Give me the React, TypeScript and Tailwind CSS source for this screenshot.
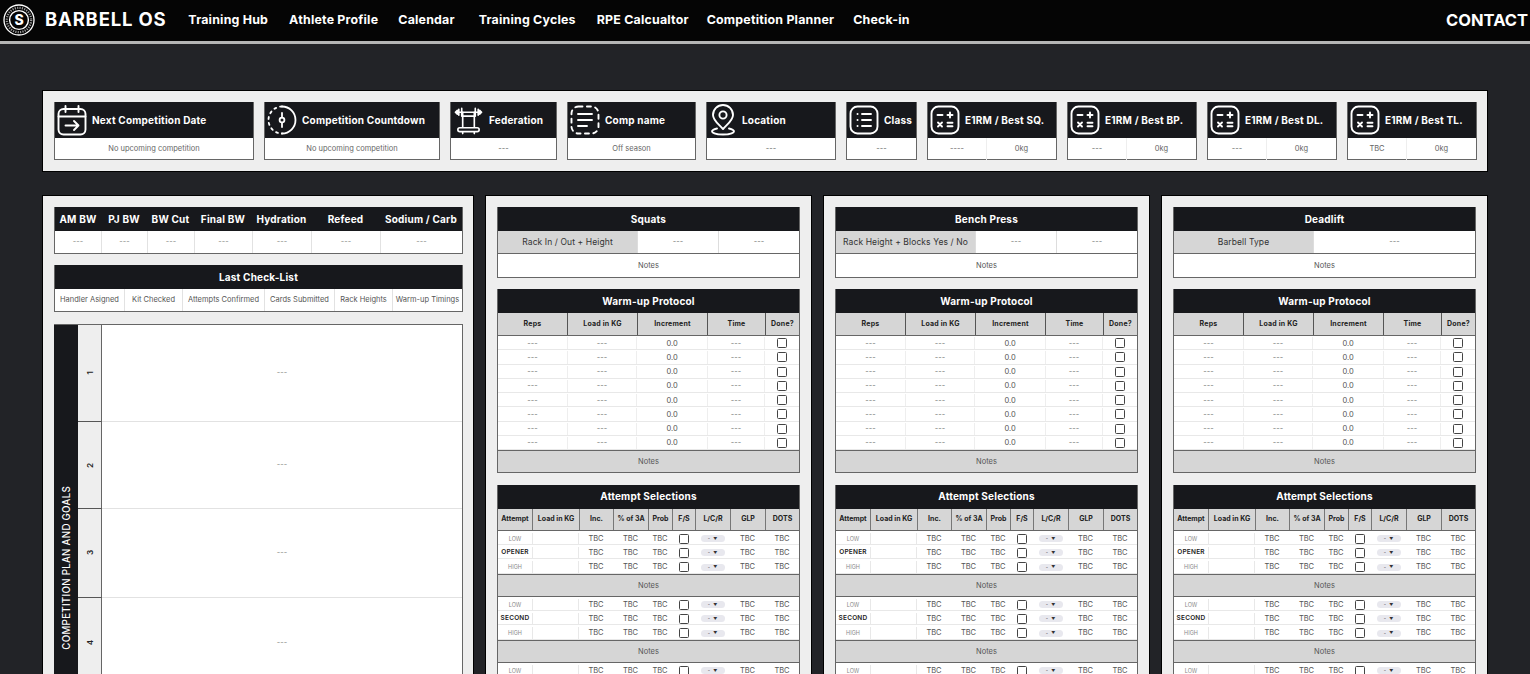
import type { ReactNode } from "react";

const navLinks = [
  { label: "Training Hub", cls: "ml-[22px]" },
  { label: "Athlete Profile", cls: "ml-[21px]" },
  { label: "Calendar", cls: "ml-[20px]" },
  { label: "Training Cycles", cls: "ml-[24px]" },
  { label: "RPE Calcualtor", cls: "ml-[21px]" },
  { label: "Competition Planner", cls: "ml-[18px]" },
  { label: "Check-in", cls: "ml-[19px]" },
];

function Logo() {
  return (
    <svg width="32" height="32" viewBox="0 0 32 32" fill="none" stroke="#fff" className="shrink-0">
      <circle cx="16" cy="16" r="15" strokeWidth="1.3" />
      <circle cx="16" cy="16" r="12.2" strokeWidth="2.2" strokeDasharray="1.2 1.2" opacity="0.6" />
      <circle cx="16" cy="16" r="9.4" strokeWidth="1.4" />
      <text x="16" y="21" textAnchor="middle" fontSize="14" fontWeight="800" fill="#fff" stroke="none" fontFamily="Inter, sans-serif">S</text>
    </svg>
  );
}

function CalendarIcon() {
  return (
    <svg width="30" height="32" viewBox="0 0 30 32" fill="none" stroke="#fff" strokeWidth="1.9" strokeLinecap="round" strokeLinejoin="round">
      <rect x="1.5" y="5" width="27" height="25.5" rx="5" />
      <path d="M1.5 12.5h27M8.5 2v6M21.5 2v6M8.5 21.5h13M17 17l4.5 4.5-4.5 4.5" />
    </svg>
  );
}

function TimerIcon() {
  return (
    <svg width="30" height="32" viewBox="0 0 30 32" fill="none" stroke="#fff" strokeWidth="1.8" strokeLinecap="round">
      <path d="M15 2.5a13.5 13.5 0 0 1 0 27" />
      <path d="M15 2.5a13.5 13.5 0 0 0 0 27" strokeDasharray="2 4" />
      <path d="M15 9v14" />
      <circle cx="15" cy="16" r="2.4" fill="#17181c" />
    </svg>
  );
}

function RackIcon() {
  return (
    <svg width="31" height="32" viewBox="0 0 32 32" fill="none" stroke="#fff" strokeWidth="1.7" strokeLinecap="round" strokeLinejoin="round">
      <path d="M6 8h20M6 5v6M9 4v8M23 4v8M26 5v6" />
      <path d="M2.5 8l2-2v4zM29.5 8l-2-2v4z" fill="#fff" />
      <path d="M10 8v16M22 8v16M10 12h12M7 24h18a2 2 0 0 1 0 4H7a2 2 0 0 1 0-4zM10 28v2M22 28v2" />
    </svg>
  );
}

function NotesIcon() {
  return (
    <svg width="30" height="32" viewBox="0 0 30 32" fill="none" stroke="#fff" strokeWidth="1.9" strokeLinecap="round">
      <rect x="1.5" y="2.5" width="27" height="27" rx="7" strokeDasharray="4 4.4" />
      <path d="M8 10h14M8 16h14M8 22h9" />
    </svg>
  );
}

function PinIcon() {
  return (
    <svg width="28" height="32" viewBox="0 0 28 32" fill="none" stroke="#fff" strokeWidth="1.9" strokeLinecap="round" strokeLinejoin="round">
      <path d="M14 25c-4-4.5-10-8.5-10-14a10 10 0 0 1 20 0c0 5.5-6 9.5-10 14z" />
      <circle cx="14" cy="11" r="3.6" />
      <path d="M8 24.5c-3 .8-5 1.6-5 2.8 0 1.8 5 3.2 11 3.2s11-1.400 11-3.200c0-1.200-2-2-5-2.800" />
    </svg>
  );
}

function ListIcon() {
  return (
    <svg width="30" height="32" viewBox="0 0 30 32" fill="none" stroke="#fff" strokeWidth="1.9" strokeLinecap="round">
      <rect x="1.5" y="2.5" width="27" height="27" rx="7" />
      <path d="M8.5 10h.1M8.5 16h.1M8.5 22h.1M13 10h9M13 16h9M13 22h9" />
    </svg>
  );
}

function CalcIcon() {
  return (
    <svg width="30" height="32" viewBox="0 0 30 32" fill="none" stroke="#fff" strokeWidth="1.9" strokeLinecap="round">
      <rect x="1.5" y="2.5" width="27" height="27" rx="7" />
      <path d="M7.5 11h5M17.5 11h5M20 8.5v5M8 18.5l4 4M12 18.5l-4 4M17.5 18.8h5M17.5 22.2h5" />
    </svg>
  );
}

function StatCard({ icon, title, width, value, second }: { icon: ReactNode; title: string; width: string; value: string; second?: string }) {
  return (
    <div className={`${width} shrink-0 border border-[#666] border-t-0 bg-white`}>
      <div className="flex h-[36px] items-center gap-[5px] overflow-hidden whitespace-nowrap bg-[#17181c] pl-[2px] text-[10px] font-bold tracking-[0.2px] text-white">
        {icon}
        {title}
      </div>
      <div className="flex h-[22px] items-center text-[7.5px] text-[#666]">
        <span className="flex-1 text-center">{value}</span>
        {second && <span className="flex h-full w-[70px] items-center justify-center border-l border-[#eee]">{second}</span>}
      </div>
    </div>
  );
}

function DarkHeader({ title }: { title: string }) {
  return <div className="flex h-[24px] items-center justify-center bg-[#17181c] text-[10px] font-bold tracking-[0.2px] text-white">{title}</div>;
}

function Checkbox() {
  return <span className="block h-[10px] w-[10px] rounded-[1.5px] border-[1.5px] border-[#444] bg-white" />;
}

function Stage({ name }: { name: string }) {
  const rows = ["LOW", name, "HIGH"];
  return (
    <>
      {rows.map((row, i) => (
        <div key={row} className="grid h-[14.2px] grid-cols-[34px_47px_34px_35px_24px_23px_35px_35px_1fr] items-center border-b border-[#e8e8e8] pt-[2px] text-center text-[7.5px] text-[#555] last:border-b-0">
          <span className={i === 1 ? "text-[6.5px] font-semibold tracking-[0.2px] text-[#222]" : "text-[5.5px] text-[#888]"}>{row}</span>
          <span className="h-full border-x border-[#e8e8e8]" />
          <span>TBC</span>
          <span>TBC</span>
          <span>TBC</span>
          <span className="flex justify-center"><Checkbox /></span>
          <span className="flex justify-center">
            <span className="flex h-[7px] w-[24px] items-center justify-center gap-[3px] rounded-full bg-[#e8e8ee] text-[5px] leading-none text-[#333]">- <span className="text-[4px]">▼</span></span>
          </span>
          <span>TBC</span>
          <span>TBC</span>
        </div>
      ))}
    </>
  );
}

function NotesBar() {
  return <div className="flex h-[23.5px] items-center justify-center border-y border-[#666] bg-[#d6d6d6] text-[7.5px] text-[#555]">Notes</div>;
}

function LiftPanel({ title, label, values }: { title: string; label: string; values: string[] }) {
  const warmCols = ["Reps", "Load in KG", "Increment", "Time", "Done?"];
  const attemptCols = ["Attempt", "Load in KG", "Inc.", "% of 3A", "Prob", "F/S", "L/C/R", "GLP", "DOTS"];
  return (
    <div className="flex flex-col gap-[11.5px] border border-black bg-[#eee] px-[11px] pb-[11px] pt-[11px]">
      <div className="border border-[#666] border-t-0 bg-white">
        <DarkHeader title={title} />
        <div className="flex h-[23px] border-b border-[#666]">
          <div className="flex w-[139px] items-center justify-center whitespace-nowrap bg-[#d6d6d6] text-[8.5px] tracking-[0.1px] text-[#333]">{label}</div>
          {values.map((v, i) => (
            <div key={i} className="flex flex-1 items-center justify-center border-l border-[#ddd] text-[7.5px] text-[#777]">{v}</div>
          ))}
        </div>
        <div className="flex h-[22.5px] items-center justify-center pt-[1px] text-[7.5px] text-[#555]">Notes</div>
      </div>

      <div className="border border-[#666] border-t-0 bg-white">
        <DarkHeader title="Warm-up Protocol" />
        <div className="grid h-[23px] grid-cols-[69px_70px_70px_58px_1fr] border-b border-[#666] bg-[#d6d6d6] text-[7px] font-bold tracking-[0.2px] text-[#222]">
          {warmCols.map((c) => (
            <div key={c} className="flex items-center justify-center border-l border-[#555] first:border-l-0">{c}</div>
          ))}
        </div>
        {[0, 1, 2, 3, 4, 5, 6, 7].map((n) => (
          <div key={n} className="grid h-[14.25px] grid-cols-[69px_70px_70px_58px_1fr] items-center border-b border-[#e8e8e8] pt-[1px] text-center text-[7.5px] text-[#777] last:border-b-0">
            <span>---</span>
            <span className="flex h-full items-center justify-center border-x border-[#eee]">---</span>
            <span className="text-[#555]">0.0</span>
            <span className="flex h-full items-center justify-center border-x border-[#eee]">---</span>
            <span className="flex justify-center"><Checkbox /></span>
          </div>
        ))}
        <div className="flex h-[22px] items-center justify-center border-t border-[#666] bg-[#d6d6d6] text-[7.5px] text-[#555]">Notes</div>
      </div>

      <div className="border border-[#666] border-t-0 bg-white">
        <DarkHeader title="Attempt Selections" />
        <div className="grid h-[22.5px] grid-cols-[34px_47px_34px_35px_24px_23px_35px_35px_1fr] border-b border-[#666] bg-[#d6d6d6] text-[7px] font-bold text-[#222]">
          {attemptCols.map((c) => (
            <div key={c} className="flex items-center justify-center whitespace-nowrap border-l border-[#777] first:border-l-0">{c}</div>
          ))}
        </div>
        <Stage name="OPENER" />
        <NotesBar />
        <Stage name="SECOND" />
        <NotesBar />
        <Stage name="THIRD" />
      </div>
    </div>
  );
}

function LeftPanel() {
  const cols = ["AM BW", "PJ BW", "BW Cut", "Final BW", "Hydration", "Refeed", "Sodium / Carb"];
  const checks = ["Handler Asigned", "Kit Checked", "Attempts Confirmed", "Cards Submitted", "Rack Heights", "Warm-up Timings"];
  const plans = [
    { n: "1", h: "h-[97px]" },
    { n: "2", h: "h-[87px]" },
    { n: "3", h: "h-[89px]" },
    { n: "4", h: "h-[90px]" },
    { n: "5", h: "h-[125px]" },
  ];
  return (
    <div className="flex flex-col border border-black bg-[#eee] pl-[11px] pr-[10px] pt-[11px]">
      <div className="border border-[#666] border-t-0 bg-white">
        <div className="grid h-[24px] grid-cols-[46px_46px_47px_58px_59px_69px_1fr] items-center bg-[#17181c] text-center text-[10px] font-bold tracking-[0.2px] text-white">
          {cols.map((c) => (
            <span key={c} className="whitespace-nowrap">{c}</span>
          ))}
        </div>
        <div className="grid h-[22px] grid-cols-[46px_46px_47px_58px_59px_69px_1fr] text-[7.5px] text-[#888]">
          {cols.map((c) => (
            <div key={c} className="flex items-center justify-center border-l border-[#e2e2e2] first:border-l-0">---</div>
          ))}
        </div>
      </div>

      <div className="mt-[11px] border border-[#666] border-t-0 bg-white">
        <DarkHeader title="Last Check-List" />
        <div className="grid h-[22px] grid-cols-[69px_58px_82px_70px_58px_1fr] text-[7.5px] text-[#555]">
          {checks.map((c) => (
            <div key={c} className="flex items-center justify-center whitespace-nowrap border-l border-[#e2e2e2] first:border-l-0">{c}</div>
          ))}
        </div>
      </div>

      <div className="mt-[12px] flex h-[488px] border border-[#666] border-l-0 bg-white">
        <div className="flex w-[24px] shrink-0 items-center justify-center bg-[#17181c] pl-[3px]">
          <span className="rotate-180 whitespace-nowrap text-[9.7px] font-medium tracking-[0.3px] text-white [writing-mode:vertical-rl]">COMPETITION PLAN AND GOALS</span>
        </div>
        <div className="flex flex-1 flex-col">
          {plans.map((p) => (
            <div key={p.n} className={`${p.h} flex shrink-0`}>
              <div className="flex w-[24px] shrink-0 items-center justify-center border-b border-r border-b-[#555] border-r-[#666] bg-[#eee] text-[8px] font-semibold text-[#222]">
                <span className="rotate-180 [writing-mode:vertical-rl]">{p.n}</span>
              </div>
              <div className="flex flex-1 items-center justify-center border-b border-[#e2e2e2] text-[7.5px] text-[#888]">---</div>
            </div>
          ))}
        </div>
      </div>
    </div>
  );
}

export default function App() {
  return (
    <div className="h-[674px] overflow-hidden bg-[#222327] font-['Inter',sans-serif]">
      <nav className="flex h-[44px] items-center border-b-[3px] border-[#b5b5b5] bg-[#050505] pb-[1px] pl-[3px] pr-[2px] text-white">
        <Logo />
        <span className="ml-[10px] whitespace-nowrap text-[18.5px] font-bold tracking-[0.8px]">BARBELL OS</span>
        {navLinks.map((link) => (
          <a key={link.label} className={`${link.cls} whitespace-nowrap text-[12.4px] font-bold tracking-[0.2px]`}>{link.label}</a>
        ))}
        <a className="ml-auto text-[16.5px] font-bold">CONTACT</a>
      </nav>

      <main className="px-[42px] pt-[46px]">
        <section className="flex h-[82px] gap-[10px] border border-black bg-[#eee] px-[11px] py-[11px]">
          <StatCard width="w-[200px]" icon={<CalendarIcon />} title="Next Competition Date" value="No upcoming competition" />
          <StatCard width="w-[176px]" icon={<TimerIcon />} title="Competition Countdown" value="No upcoming competition" />
          <StatCard width="w-[107px]" icon={<RackIcon />} title="Federation" value="---" />
          <StatCard width="w-[129px]" icon={<NotesIcon />} title="Comp name" value="Off season" />
          <StatCard width="w-[130px]" icon={<PinIcon />} title="Location" value="---" />
          <StatCard width="w-[71px]" icon={<ListIcon />} title="Class" value="---" />
          <StatCard width="w-[130px]" icon={<CalcIcon />} title="E1RM / Best SQ." value="----" second="0kg" />
          <StatCard width="w-[130px]" icon={<CalcIcon />} title="E1RM / Best BP." value="---" second="0kg" />
          <StatCard width="w-[130px]" icon={<CalcIcon />} title="E1RM  / Best DL." value="---" second="0kg" />
          <StatCard width="w-[130px]" icon={<CalcIcon />} title="E1RM / Best TL." value="TBC" second="0kg" />
        </section>

        <section className="mt-[23px] grid grid-cols-[432px_327px_327px_327px] gap-[11px]">
          <LeftPanel />
          <LiftPanel title="Squats" label="Rack In / Out + Height" values={["---", "---"]} />
          <LiftPanel title="Bench Press" label="Rack Height + Blocks Yes / No" values={["---", "---"]} />
          <LiftPanel title="Deadlift" label="Barbell Type" values={["---"]} />
        </section>
      </main>
    </div>
  );
}
